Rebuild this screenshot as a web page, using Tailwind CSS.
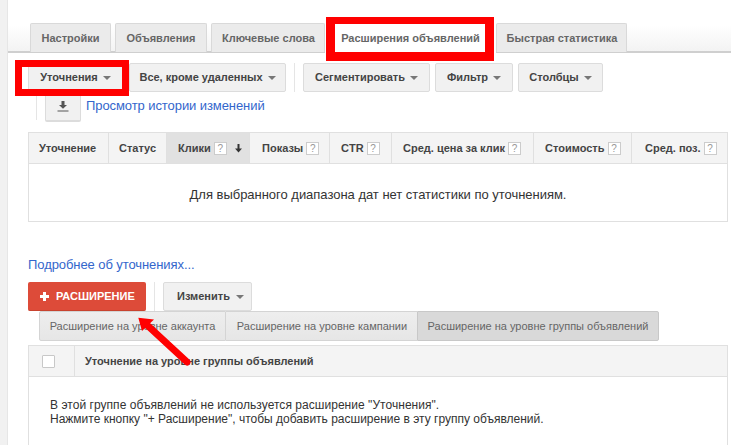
<!doctype html>
<html lang="ru">
<head>
<meta charset="utf-8">
<script src="https://cdn.jsdelivr.net/npm/@tailwindcss/browser@4"></script>
</head>
<body class="font-['Liberation_Sans',Arial,sans-serif] bg-white">
<div class="relative flex w-[731px] h-[445px] overflow-hidden">
  <!-- left gutter -->
  <div class="w-[8px] shrink-0 bg-[#f1f1f1] border-r border-[#e6e6e6]"></div>

  <div class="flex-1 min-w-0">
    <!-- tabs -->
    <div class="flex h-[53px] pt-[23px] pl-[22px] border-b-2 border-[#cfcfcf] bg-gradient-to-b from-white from-50% to-[#f3f3f3] text-[11px] font-bold text-[#666]">
      <div class="w-[81px] h-[29px] mr-[4px] flex items-center justify-center bg-[#ebebeb] border border-b-0 border-[#d9d9d9] rounded-t-[2px]">Настройки</div>
      <div class="w-[92px] h-[29px] mr-[4px] flex items-center justify-center bg-[#ebebeb] border border-b-0 border-[#d9d9d9] rounded-t-[2px]">Объявления</div>
      <div class="w-[114px] h-[29px] pl-[1px] flex items-center justify-center bg-[#ebebeb] border border-b-0 border-[#d9d9d9] rounded-t-[2px]">Ключевые слова</div>
      <div class="w-[171px] h-[30px] flex items-center justify-center bg-white">Расширения объявлений</div>
      <div class="w-[131px] h-[29px] pl-[1px] flex items-center justify-center bg-[#ebebeb] border border-b-0 border-[#d9d9d9] rounded-t-[2px]">Быстрая статистика</div>
    </div>

    <!-- toolbar -->
    <div class="flex items-center h-[29px] mt-[10px] pl-[20px] text-[11px] font-bold text-[#444]">
      <div class="w-[95px] h-[29px] mr-[6px] flex items-center justify-center gap-[5px] bg-[#f1f1f1] border border-[#dcdcdc] rounded-[2px]">Уточнения <span class="border-x-[4px] border-t-[4px] border-x-transparent border-t-[#777]"></span></div>
      <div class="w-[157px] h-[29px] flex items-center justify-center gap-[5px] bg-[#f1f1f1] border border-[#dcdcdc] rounded-[2px]">Все, кроме удаленных <span class="border-x-[4px] border-t-[4px] border-x-transparent border-t-[#777]"></span></div>
      <div class="w-px h-[29px] mx-[8px] bg-[#e5e5e5]"></div>
      <div class="w-[127px] h-[29px] mr-[5px] flex items-center justify-center gap-[5px] bg-[#f1f1f1] border border-[#dcdcdc] rounded-[2px]">Сегментировать <span class="border-x-[4px] border-t-[4px] border-x-transparent border-t-[#777]"></span></div>
      <div class="w-[78px] h-[29px] mr-[5px] flex items-center justify-center gap-[5px] bg-[#f1f1f1] border border-[#dcdcdc] rounded-[2px]">Фильтр <span class="border-x-[4px] border-t-[4px] border-x-transparent border-t-[#777]"></span></div>
      <div class="w-[85px] h-[29px] flex items-center justify-center gap-[5px] bg-[#f1f1f1] border border-[#dcdcdc] rounded-[2px]">Столбцы <span class="border-x-[4px] border-t-[4px] border-x-transparent border-t-[#777]"></span></div>
    </div>

    <!-- history -->
    <div class="flex items-center h-[30px] ml-[28px]">
      <div class="w-px h-[26px] mr-[8px] bg-[#e5e5e5]"></div>
      <div class="w-[36px] h-[30px] flex items-center justify-center bg-[#f1f1f1] border border-t-0 border-b-2 border-[#dcdcdc] rounded-b-[2px]">
        <svg width="12" height="12" viewBox="0 0 12 12"><path d="M4.500 1h3v4h2.500L6 8.700 2 5h2.500z" fill="#555"/><path d="M0.500 10.500h11v1h-11z" fill="#555"/></svg>
      </div>
      <a class="ml-[5px] mb-[2px] text-[13px] tracking-[-0.08px] text-[#3366cc]">Просмотр истории изменений</a>
    </div>

    <!-- stats table -->
    <div class="ml-[20px] mt-[10px] w-[700px] h-[90px] border border-[#e0e0e0]">
      <div class="flex h-[31px] bg-[#f4f4f4] border-b border-[#e0e0e0] text-[11px] font-bold text-[#444]">
        <div class="w-[80px] pl-[10px] flex items-center border-r border-[#e0e0e0]">Уточнение</div>
        <div class="w-[58px] pl-[10px] flex items-center border-r border-[#e0e0e0]">Статус</div>
        <div class="w-[83px] pl-[11px] flex items-center gap-[3px] bg-[#e1e1e1] border-r border-[#e0e0e0]">Клики <span class="w-[13px] h-[13px] flex items-center justify-center bg-white border border-[#ccc] font-normal text-[10px] text-[#999]">?</span>
          <svg class="ml-[4px]" width="9" height="9" viewBox="0 0 9 9"><path d="M3.500 0h2v4.500H8L4.500 8.500 1 4.500h2.500z" fill="#333"/></svg></div>
        <div class="w-[80px] pl-[12px] flex items-center gap-[3px] border-r border-[#e0e0e0]">Показы <span class="w-[13px] h-[13px] flex items-center justify-center bg-white border border-[#ccc] font-normal text-[10px] text-[#999]">?</span></div>
        <div class="w-[62px] pl-[11px] flex items-center gap-[3px] border-r border-[#e0e0e0]">CTR <span class="w-[13px] h-[13px] flex items-center justify-center bg-white border border-[#ccc] font-normal text-[10px] text-[#999]">?</span></div>
        <div class="w-[142px] pl-[11px] flex items-center gap-[3px] border-r border-[#e0e0e0]">Сред. цена за клик <span class="w-[13px] h-[13px] flex items-center justify-center bg-white border border-[#ccc] font-normal text-[10px] text-[#999]">?</span></div>
        <div class="w-[98px] pl-[11px] flex items-center gap-[3px] border-r border-[#e0e0e0]">Стоимость <span class="w-[13px] h-[13px] flex items-center justify-center bg-white border border-[#ccc] font-normal text-[10px] text-[#999]">?</span></div>
        <div class="flex-1 pl-[13px] flex items-center gap-[3px]">Сред. поз. <span class="w-[13px] h-[13px] flex items-center justify-center bg-white border border-[#ccc] font-normal text-[10px] text-[#999]">?</span></div>
      </div>
      <div class="flex justify-center pt-[21px] text-[13px] tracking-[-0.02px] text-[#333]">Для выбранного диапазона дат нет статистики по уточнениям.</div>
    </div>

    <a class="block ml-[20px] mt-[34px] h-[17px] leading-[17px] text-[13px] tracking-[-0.08px] text-[#3366cc]">Подробнее об уточнениях...</a>

    <!-- action buttons -->
    <div class="flex ml-[20px] mt-[9px] h-[29px]">
      <div class="w-[118px] pl-[12px] flex items-center gap-[7px] bg-[#dd4b39] border-b border-[#c8432f] rounded-[2px] text-[11px] font-bold text-white">
        <svg width="9" height="9" viewBox="0 0 9 9"><path d="M3 0h3v3h3v3H6v3H3V6H0V3h3z" fill="#fff"/></svg>
        РАСШИРЕНИЕ
      </div>
      <div class="w-px h-[29px] mx-[8px] bg-[#e5e5e5]"></div>
      <div class="w-[89px] pl-[13px] flex items-center gap-[6px] bg-[#f1f1f1] border border-[#dcdcdc] rounded-[2px] text-[11px] font-bold text-[#444]">Изменить <span class="border-x-[4px] border-t-[4px] border-x-transparent border-t-[#777]"></span></div>
    </div>

    <!-- level switch -->
    <div class="flex items-stretch ml-[31px] h-[30px] text-[11px] text-[#666]">
      <div class="w-[187px] flex items-center justify-center bg-gradient-to-b from-[#eeeeee] to-[#e6e6e6] border border-[#d4d4d4] rounded-l-[2px]">Расширение на уровне аккаунта</div>
      <div class="w-[191px] pl-[1px] flex items-center justify-center bg-gradient-to-b from-[#eeeeee] to-[#e6e6e6] border-y border-[#d4d4d4]">Расширение на уровне кампании</div>
      <div class="w-[242px] flex items-center justify-center bg-[#d9d9d9] border border-[#c8c8c8] rounded-r-[2px]">Расширение на уровне группы объявлений</div>
    </div>

    <!-- extensions table -->
    <div class="ml-[20px] mt-[4px] w-[700px] h-[110px] border border-[#e0e0e0]">
      <div class="flex h-[31px] bg-[#f4f4f4] border-b border-[#e0e0e0] text-[11px] font-bold text-[#444]">
        <div class="w-[46px] pl-[13px] flex items-center border-r border-[#e0e0e0]">
          <div class="w-[13px] h-[13px] bg-white border border-[#c8c8c8] rounded-[1px]"></div>
        </div>
        <div class="flex items-center pl-[10px]">Уточнение на уровне группы объявлений</div>
      </div>
      <div class="pl-[21px] pt-[21px] text-[12px] leading-[14px] text-[#333]">
        <p class="tracking-[0.04px]">В этой группе объявлений не используется расширение "Уточнения".</p>
        <p>Нажмите кнопку "+ Расширение", чтобы добавить расширение в эту группу объявлений.</p>
      </div>
    </div>
  </div>

  <!-- red annotations over the page -->
  <div class="absolute left-[15px] top-[60px] w-[114px] h-[36px] border-x-[7px] border-y-[7px] border-[#ff0000]"></div>
  <div class="absolute left-[326px] top-[17px] w-[168px] h-[44px] border-x-[9px] border-t-[7px] border-b-[9px] border-[#ff0000]"></div>
  <svg class="absolute left-[130px] top-[310px]" width="70" height="65" viewBox="0 0 70 65">
    <path d="M57 52 L17 15" stroke="#ff0000" stroke-width="7" stroke-linecap="round" fill="none"/>
    <path d="M8.300 7.700 L24 9.500 L12 21 z" fill="#ff0000"/>
  </svg>
</div>
</body>
</html>
